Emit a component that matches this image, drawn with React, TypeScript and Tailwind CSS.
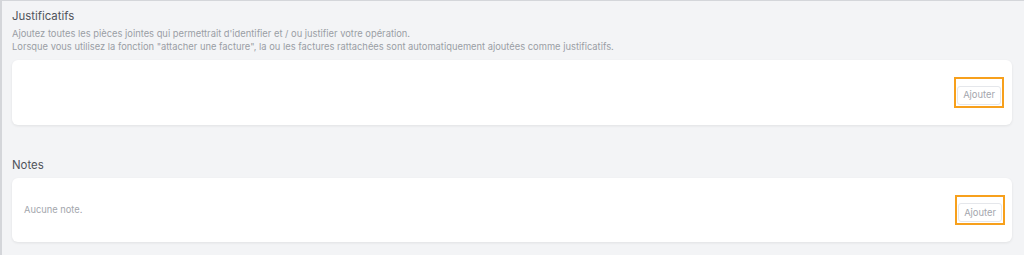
import React from 'react';

const AddButton: React.FC = () => (
  <div className="border-2 border-[#f7a01c] p-px">
    <button className="h-[19px] px-[5px] rounded-[3px] border border-gray-200 bg-white text-[9.4px] leading-none text-[#a3a6ad]">
      Ajouter
    </button>
  </div>
);

const App: React.FC = () => {
  return (
    <div
      className="w-[1024px] h-[255px] overflow-hidden bg-[#f3f4f6] border-l-2 border-t border-[#d4d6da] pl-[10px] pr-[12px] pt-[5px]"
      style={{ fontFamily: 'Inter, "Noto Sans", sans-serif' }}
    >
      {/* Justificatifs */}
      <h2 className="text-[11.4px] leading-[20px] text-[#4f535a]">Justificatifs</h2>
      <div className="mt-[1px] text-[9.35px] leading-[13px] text-[#9a9ea5]">
        <p>Ajoutez toutes les pièces jointes qui permettrait d'identifier et / ou justifier votre opération.</p>
        <p>
          Lorsque vous utilisez la fonction "attacher une facture", la ou les factures rattachées sont automatiquement
          ajoutées comme justificatifs.
        </p>
      </div>
      <div className="mt-[7px] h-[65px] rounded-md bg-white shadow-[0_1px_3px_rgba(0,0,0,0.08)] flex items-center justify-end pr-[8px]">
        <AddButton />
      </div>

      {/* Notes */}
      <h2 className="mt-[30px] text-[11.4px] leading-[20px] text-[#4f535a]">Notes</h2>
      <div className="mt-[3px] h-[64px] rounded-md bg-white shadow-[0_1px_3px_rgba(0,0,0,0.08)] flex items-center justify-between pl-[12px] pr-[7px]">
        <span className="text-[9.3px] text-[#a3a6ad]">Aucune note.</span>
        <AddButton />
      </div>
    </div>
  );
};

export default App;
